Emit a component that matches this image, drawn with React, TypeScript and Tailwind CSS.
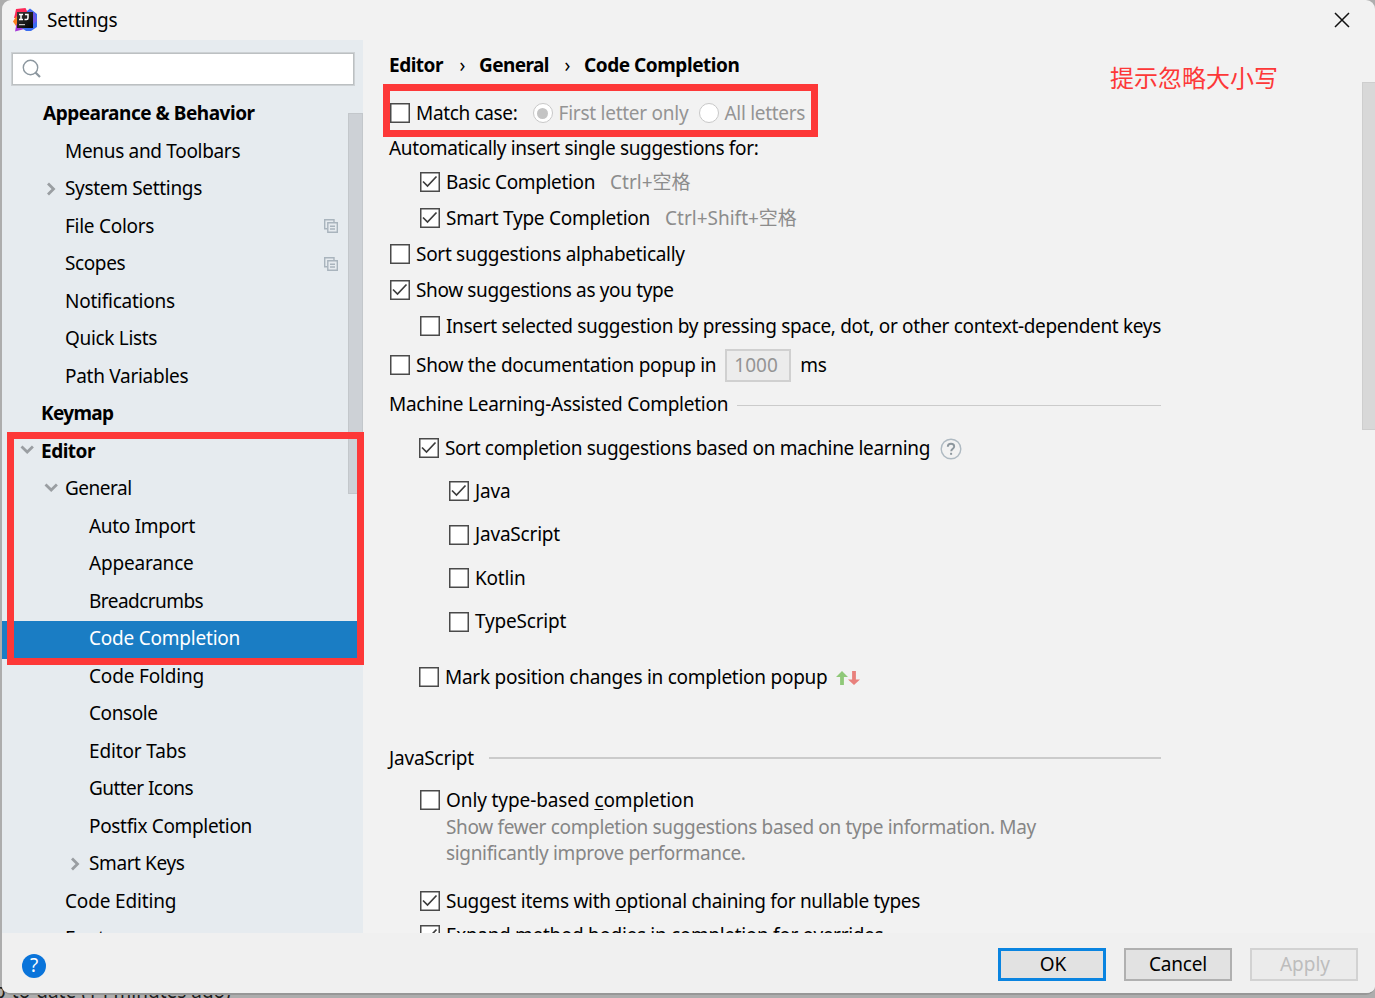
import type { ReactNode } from 'react';
import { clsx } from 'clsx';

interface TreeItem {
  label: string;
  pad: string;
  tracking?: string;
  bold?: boolean;
  arrow?: 'open' | 'closed';
  copy?: boolean;
  selected?: boolean;
}

const TREE: TreeItem[] = [
  { label: 'Appearance & Behavior', pad: 'pl-[41px]', tracking: 'tracking-[-0.48px]', bold: true },
  { label: 'Menus and Toolbars', pad: 'pl-[63px]', tracking: 'tracking-[-0.32px]' },
  { label: 'System Settings', pad: 'pl-[63px]', tracking: 'tracking-[-0.32px]', arrow: 'closed' },
  { label: 'File Colors', pad: 'pl-[63px]', tracking: 'tracking-[-0.27px]', copy: true },
  { label: 'Scopes', pad: 'pl-[63px]', tracking: 'tracking-[-0.4px]', copy: true },
  { label: 'Notifications', pad: 'pl-[63px]', tracking: 'tracking-[-0.24px]' },
  { label: 'Quick Lists', pad: 'pl-[63px]', tracking: 'tracking-[-0.32px]' },
  { label: 'Path Variables', pad: 'pl-[63px]', tracking: 'tracking-[-0.28px]' },
  { label: 'Keymap', pad: 'pl-[39px]', tracking: 'tracking-[-0.65px]', bold: true },
  { label: 'Editor', pad: 'pl-[39px]', tracking: 'tracking-[-0.5px]', bold: true, arrow: 'open' },
  { label: 'General', pad: 'pl-[63px]', tracking: 'tracking-[-0.5px]', arrow: 'open' },
  { label: 'Auto Import', pad: 'pl-[87px]', tracking: 'tracking-[-0.3px]' },
  { label: 'Appearance', pad: 'pl-[87px]', tracking: 'tracking-[-0.2px]' },
  { label: 'Breadcrumbs', pad: 'pl-[87px]', tracking: 'tracking-[-0.55px]' },
  { label: 'Code Completion', pad: 'pl-[87px]', tracking: 'tracking-[-0.22px]', selected: true },
  { label: 'Code Folding', pad: 'pl-[87px]', tracking: 'tracking-[-0.17px]' },
  { label: 'Console', pad: 'pl-[87px]', tracking: 'tracking-[-0.43px]' },
  { label: 'Editor Tabs', pad: 'pl-[87px]', tracking: 'tracking-[-0.15px]' },
  { label: 'Gutter Icons', pad: 'pl-[87px]', tracking: 'tracking-[-0.55px]' },
  { label: 'Postfix Completion', pad: 'pl-[87px]', tracking: 'tracking-[-0.33px]' },
  { label: 'Smart Keys', pad: 'pl-[87px]', tracking: 'tracking-[-0.4px]', arrow: 'closed' },
  { label: 'Code Editing', pad: 'pl-[63px]', tracking: 'tracking-[-0.15px]' },
  { label: 'Font', pad: 'pl-[63px]' },
];

function AppLogo() {
  return (
    <svg width="24" height="24" viewBox="0 0 24 24" className="shrink-0">
      <defs>
        <linearGradient id="tile" x1="0" y1="0" x2="1" y2="1">
          <stop offset="0" stopColor="#3a3a3a" />
          <stop offset="1" stopColor="#000" />
        </linearGradient>
      </defs>
      <path d="M3 1 12.500 0 15 5l-3 5H1l1-4z" fill="#fe2857" />
      <path d="M0 13.500 3.500 8 8 17l-5 1z" fill="#fc801d" />
      <path d="M3.500 16h9l-1 5-9.500 2.500z" fill="#a63ad8" />
      <path d="M14 3l3-2.500L24 6v13L18 23h-5l-4-3z" fill="#3a6cf0" />
      <path d="M16 2.500l6 2.500 2 8-5 4z" fill="#6b57e8" />
      <rect x="4" y="4" width="16" height="16" fill="url(#tile)" />
      <path d="M6 6.500h4M6 11.500h4M8 6.500v5M12 6.500h3v3.500q0 1.500-1.500 1.500h-2" fill="none" stroke="#fff" strokeWidth="1.500" />
      <path d="M6 16.700h6" stroke="#c4c4c4" strokeWidth="1.200" />
    </svg>
  );
}

function Arrow({ open }: { open: boolean }) {
  return (
    <svg width="16" height="16" viewBox="0 0 16 16" className="shrink-0">
      <path
        d={open ? 'M2.500 4.500 8.200 10l5.700-5.500' : 'M5 2.500 10.500 8 5 13.500'}
        fill="none"
        stroke="#9a9ea2"
        strokeWidth="2.800"
      />
    </svg>
  );
}

function CopyIcon() {
  return (
    <svg width="14" height="14" viewBox="0 0 14 14" fill="none" stroke="#a9b4bd" strokeWidth="1.400">
      <path d="M3.500 9.800H.7V.7H10v2.500" />
      <path d="M3.800 3.800h9.500v9.500H3.800zM6 7.200h5M6 10h5" />
    </svg>
  );
}

function TreeRow({ item }: { item: TreeItem }) {
  return (
    <div
      className={clsx(
        'flex h-[37.5px] shrink-0 items-center pb-[2px]',
        item.pad,
        item.selected && 'bg-[#1a7dc4] text-white',
        item.bold && 'font-bold',
      )}
    >
      {item.arrow && (
        <span className={clsx('-ml-[22px] mr-[6px]', item.arrow === 'open' && 'mb-[2px]')}>
          <Arrow open={item.arrow === 'open'} />
        </span>
      )}
      <span className={item.tracking}>{item.label}</span>
      {item.copy && (
        <span className="ml-auto mr-[25px]">
          <CopyIcon />
        </span>
      )}
    </div>
  );
}

function Box({ checked }: { checked?: boolean }) {
  return (
    <svg width="20" height="20" viewBox="0 0 20 20" className="shrink-0">
      <rect x=".75" y=".75" width="18.500" height="18.500" fill="#fff" stroke="#4a4a4a" strokeWidth="1.500" />
      {checked && <path d="M3 9.500 7.500 14l9-9.500" fill="none" stroke="#3c3c3c" strokeWidth="1.700" />}
    </svg>
  );
}

interface CheckProps {
  className: string;
  checked?: boolean;
  tracking?: string;
  label: ReactNode;
  children?: ReactNode;
}

function Check({ className, checked, tracking, label, children }: CheckProps) {
  return (
    <div className={clsx('flex shrink-0 items-center pl-px', className)}>
      <Box checked={checked} />
      <span className={clsx('ml-[6px]', tracking)}>{label}</span>
      {children}
    </div>
  );
}

function Radio({ on }: { on?: boolean }) {
  return (
    <span className="flex size-[20px] shrink-0 items-center justify-center rounded-full border-[1.5px] border-[#c8c8c8] bg-white">
      {on && <span className="size-[11px] rounded-full bg-[#c4c4c4]" />}
    </span>
  );
}

function Section({ title, className, line, tracking }: { title: string; className: string; line: string; tracking: string }) {
  return (
    <div className={clsx('flex h-[30px] w-[772px] shrink-0 items-center', className)}>
      <span className={tracking}>{title}</span>
      <span className={clsx('flex-1 bg-[#cbcbcb]', line)} />
    </div>
  );
}

function Sidebar() {
  return (
    <aside className="relative flex w-[361px] shrink-0 flex-col overflow-hidden bg-[#e6ebef]">
      <div className="ml-[9px] mt-[12px] flex h-[34px] w-[344px] shrink-0 items-center border border-[#cdd1d4] bg-white">
        <div className="flex h-full w-full items-center border border-[#bcc0c2] pl-[9px]">
          <svg width="20" height="20" viewBox="0 0 20 20" fill="none" stroke="#8c979f">
            <circle cx="8.500" cy="8.500" r="7.200" strokeWidth="1.400" />
            <path d="m13.500 13.500 4.500 4.500" strokeWidth="2.200" />
          </svg>
        </div>
      </div>
      <nav className="mt-[10px] flex flex-col">
        {TREE.map((item, i) => (
          <TreeRow key={i} item={item} />
        ))}
      </nav>
      <div className="absolute right-0 top-[73px] h-[381px] w-[15px] border border-[#c3c7cb] bg-[#cdd1d6]" />
    </aside>
  );
}

function CompletionPage() {
  return (
    <main className="relative flex flex-1 flex-col overflow-hidden pl-[26px]">
      <div className="mt-[10px] flex h-[30px] shrink-0 items-center font-bold">
        <span className="w-[54px] tracking-[-0.5px]">Editor</span>
        <span className="w-[36px] pl-[3px] text-center font-normal">›</span>
        <span className="w-[69px] tracking-[-0.6px]">General</span>
        <span className="w-[36px] pl-[3px] text-center font-normal">›</span>
        <span className="tracking-[-0.45px]">Code Completion</span>
      </div>

      <Check className="mt-[15px] h-[36px]" tracking="tracking-[-0.34px]" label="Match case:">
        <span className="ml-[15px] flex items-center text-[#949494]">
          <Radio on />
          <span className="ml-[6px] w-[130px] tracking-[-0.25px]">First letter only</span>
          <span className="ml-[10px]">
            <Radio />
          </span>
          <span className="ml-[6px] tracking-[-0.3px]">All letters</span>
        </span>
      </Check>
      <div className="mt-[2px] flex h-[30px] shrink-0 items-center tracking-[-0.35px]">
        Automatically insert single suggestions for:
      </div>
      <Check className="ml-[30px] mt-px h-[36px]" checked tracking="tracking-[-0.35px]" label="Basic Completion">
        <span className="ml-[15px] text-[#8c8c8c]">Ctrl+空格</span>
      </Check>
      <Check className="ml-[30px] h-[36px]" checked tracking="tracking-[-0.25px]" label="Smart Type Completion">
        <span className="ml-[15px] text-[#8c8c8c]">Ctrl+Shift+空格</span>
      </Check>
      <Check className="h-[36px]" tracking="tracking-[-0.29px]" label="Sort suggestions alphabetically" />
      <Check className="h-[36px]" checked tracking="tracking-[-0.36px]" label="Show suggestions as you type" />
      <Check
        className="ml-[30px] h-[36px]"
        tracking="tracking-[-0.32px]"
        label="Insert selected suggestion by pressing space, dot, or other context-dependent keys"
      />
      <Check className="mt-[3px] h-[36px]" tracking="tracking-[-0.28px]" label="Show the documentation popup in">
        <span className="ml-[9px] flex h-[33px] w-[66px] items-center border-2 border-[#d0d0d0] bg-[#ececec] pl-[7px] text-[#949494]">
          1000
        </span>
        <span className="ml-[9px] tracking-[-0.3px]">ms</span>
      </Check>

      <Section
        className="mt-[6px]"
        title="Machine Learning-Assisted Completion"
        tracking="tracking-[-0.26px]"
        line="ml-[9px] mt-[2px] h-px"
      />
      <Check
        className="ml-[29px] mt-[11px] h-[36px]"
        checked
        tracking="tracking-[-0.34px]"
        label="Sort completion suggestions based on machine learning"
      >
        <svg width="22" height="22" viewBox="0 0 22 22" fill="none" className="ml-[10px] mt-[2px] shrink-0">
          <circle cx="11" cy="11" r="9.800" stroke="#afbac2" strokeWidth="1.400" />
          <path d="M7.800 8.800c0-2 1.300-3 3.200-3s3.200 1 3.200 2.700c0 2.200-3 2.200-3 4.700" stroke="#8d979e" strokeWidth="1.900" />
          <path d="M10.100 14.800h2v2h-2z" fill="#8d979e" />
        </svg>
      </Check>
      <Check className="ml-[59px] mt-[3.5px] h-[43.5px]" checked tracking="tracking-[-0.2px]" label="Java" />
      <Check className="ml-[59px] h-[43.5px]" tracking="tracking-[-0.2px]" label="JavaScript" />
      <Check className="ml-[59px] h-[43.5px]" tracking="tracking-[-0.2px]" label="Kotlin" />
      <Check className="ml-[59px] h-[43.5px]" tracking="tracking-[-0.2px]" label="TypeScript" />
      <Check
        className="ml-[29px] mt-[15.5px] h-[36px]"
        tracking="tracking-[-0.26px]"
        label="Mark position changes in completion popup"
      >
        <svg width="24" height="14" viewBox="0 0 24 14" className="ml-[8px] mt-[2px] shrink-0">
          <path d="M6 0l6 6H7.900v8H4.100V6H0z" fill="#8fc878" />
          <path d="M18 14l6-5.500h-4.100V0h-3.800v8.500H12z" fill="#e8807c" />
        </svg>
      </Check>

      <Section className="mt-[48px]" title="JavaScript" tracking="tracking-[-0.2px]" line="ml-[15px] h-[2px]" />
      <Check
        className="ml-[30px] mt-[9px] h-[36px]"
        tracking="tracking-[-0.1px]"
        label={
          <>
            Only type-based <u className="underline-offset-2">c</u>ompletion
          </>
        }
      />
      <p className="-mt-[4px] ml-[57px] shrink-0 leading-[26px] tracking-[-0.34px] text-[#868686]">
        Show fewer completion suggestions based on type information. May
        <br />
        significantly improve performance.
      </p>
      <Check
        className="ml-[30px] mt-[17px] h-[36px]"
        checked
        tracking="tracking-[-0.29px]"
        label={
          <>
            Suggest items with <u className="underline-offset-2">o</u>ptional chaining for nullable types
          </>
        }
      />
      <Check
        className="-mt-[2px] ml-[30px] h-[36px]"
        checked
        tracking="tracking-[-0.32px]"
        label="Expand method bodies in completion for overrides"
      />

      <div className="absolute right-0 top-[42px] h-[348px] w-[13px] border-y border-l border-[#cecece] bg-[#d8d8d8]" />
    </main>
  );
}

export default function App() {
  return (
    <div className="relative h-[998px] w-[1375px] overflow-hidden whitespace-nowrap bg-[#adadad] font-['Noto_Sans','Noto_Sans_CJK_SC',sans-serif] text-[19px] leading-none text-black">
      {/* status bar of the window behind */}
      <div className="absolute -left-[6px] top-[982px] text-[#1c1c1c]">p-to-date (14 minutes ago)</div>

      <div className="relative ml-[2px] flex h-[995px] w-[1373px] flex-col overflow-hidden rounded-[9px] border-b-2 border-[#979797] bg-[#f2f2f2]">
        <header className="flex h-[40px] shrink-0 items-center pl-[11px] pr-[25px]">
          <AppLogo />
          <span className="ml-[10px] tracking-[-0.25px]">Settings</span>
          <svg width="16" height="16" viewBox="0 0 16 16" className="ml-auto">
            <path d="M1 1l14 14M15 1 1 15" stroke="#111" strokeWidth="1.500" />
          </svg>
        </header>

        <div className="flex h-[893px] shrink-0">
          <Sidebar />
          <CompletionPage />
        </div>

        <footer className="flex flex-1 items-center bg-[#f0f0f0] pl-[20px] pr-[17px] pt-[3px]">
          <span className="mt-[2px] flex size-[24px] items-center justify-center rounded-full bg-[#0a74da] text-white">?</span>
          <div className="ml-auto flex gap-[18px]">
            <button className="h-[33px] w-[108px] border-[3px] border-[#0a84e0] bg-[#e2e2e2] pl-[2px]">OK</button>
            <button className="h-[33px] w-[108px] border-2 border-[#b0b0b0] bg-[#e2e2e2] tracking-[-0.2px]">Cancel</button>
            <button className="h-[33px] w-[108px] border-2 border-[#d2d2d2] bg-[#ebebeb] pl-[2px] text-[#bdbdbd]">Apply</button>
          </div>
        </footer>
      </div>

      {/* red markup over the dialog */}
      <div className="absolute left-[383px] top-[84px] h-[53px] w-[435px] border-[7px] border-[#fd3838]" />
      <div className="absolute left-[7px] top-[432px] h-[233px] w-[357px] border-[7px] border-[#fd3838]" />
      <div className="absolute left-[1110px] top-[66px] text-[24px] text-[#fd3838]">提示忽略大小写</div>
    </div>
  );
}
